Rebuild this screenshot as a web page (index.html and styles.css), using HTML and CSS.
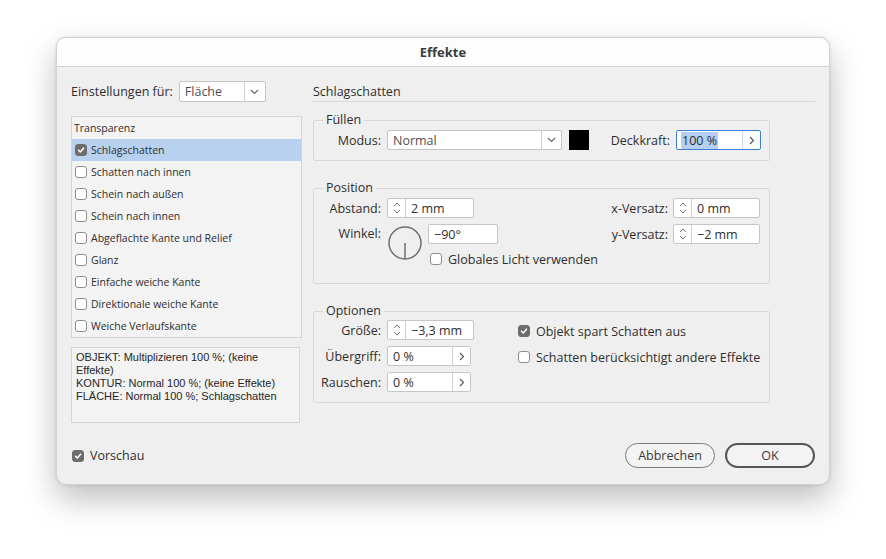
FILE: index.html
```html
<!DOCTYPE html>
<html lang="de">
<head>
<meta charset="utf-8">
<title>Effekte</title>
<link rel="stylesheet" href="styles.css">
</head>
<body>
<div class="dialog">
  <div class="titlebar">Effekte</div>
  <div class="content">
    <div class="leftcol">
      <div class="settings">
        <span class="lbl">Einstellungen für:</span>
        <div class="select sel-flaeche">
          <span class="sel-text">Fläche</span>
          <span class="sel-btn"><svg width="9" height="6" viewBox="0 0 9 6"><polyline points="1,1 4.5,4.5 8,1" fill="none" stroke="#666" stroke-width="1.1"/></svg></span>
        </div>
      </div>
      <div class="list">
        <div class="list-head">Transparenz</div>
        <div class="item selected"><span class="cb checked"><svg width="12" height="12" viewBox="0 0 12 12"><polyline points="3,6.2 5.2,8.4 9,3.8" fill="none" stroke="#fff" stroke-width="1.8" stroke-linecap="round" stroke-linejoin="round"/></svg></span>Schlagschatten</div>
        <div class="item"><span class="cb"></span>Schatten nach innen</div>
        <div class="item"><span class="cb"></span>Schein nach außen</div>
        <div class="item"><span class="cb"></span>Schein nach innen</div>
        <div class="item"><span class="cb"></span>Abgeflachte Kante und Relief</div>
        <div class="item"><span class="cb"></span>Glanz</div>
        <div class="item"><span class="cb"></span>Einfache weiche Kante</div>
        <div class="item"><span class="cb"></span>Direktionale weiche Kante</div>
        <div class="item"><span class="cb"></span>Weiche Verlaufskante</div>
      </div>
      <div class="info">OBJEKT: Multiplizieren 100 %; (keine Effekte)<br>KONTUR: Normal 100 %; (keine Effekte)<br>FLÄCHE: Normal 100 %; Schlagschatten</div>
    </div>
    <div class="rightcol">
      <div class="section-title">Schlagschatten</div>

      <fieldset class="group g-fill">
        <legend>Füllen</legend>
        <div class="fill-row">
          <span class="flabel">Modus:</span>
          <div class="select sel-modus">
            <span class="sel-text">Normal</span>
            <span class="sel-btn"><svg width="9" height="6" viewBox="0 0 9 6"><polyline points="1,1 4.5,4.5 8,1" fill="none" stroke="#666" stroke-width="1.1"/></svg></span>
          </div>
          <span class="swatch"></span>
          <span class="spacer"></span>
          <span class="lbl">Deckkraft:</span>
          <div class="field arrowfield focus">
            <span class="ftext"><span class="hl">100 %</span></span>
            <span class="arrow"><svg width="6" height="9" viewBox="0 0 6 9"><polyline points="1,1 4.5,4.5 1,8" fill="none" stroke="#555" stroke-width="1.1"/></svg></span>
          </div>
        </div>
      </fieldset>

      <fieldset class="group g-pos">
        <legend>Position</legend>
        <div class="split">
          <div class="block">
            <div class="row">
              <span class="flabel">Abstand:</span>
              <div class="field spin">
                <span class="spinbtn"><svg width="8" height="14" viewBox="0 0 8 14"><polyline points="1,5 4,2 7,5" fill="none" stroke="#777" stroke-width="1"/><polyline points="1,9 4,12 7,9" fill="none" stroke="#777" stroke-width="1"/></svg></span>
                <span class="ftext">2 mm</span>
              </div>
            </div>
            <div class="row angle-row">
              <span class="flabel">Winkel:</span>
              <svg class="dial" width="36" height="36" viewBox="0 0 36 36"><circle cx="18" cy="18" r="16" fill="none" stroke="#6e6e6e" stroke-width="1.5"/><line x1="18" y1="18" x2="18" y2="34" stroke="#6e6e6e" stroke-width="1.5"/></svg>
              <div class="angle-col">
                <div class="field angle"><span class="ftext">−90°</span></div>
                <label class="check"><span class="cb"></span>Globales Licht verwenden</label>
              </div>
            </div>
          </div>
          <div class="block right">
            <div class="row">
              <span class="lbl">x-Versatz:</span>
              <div class="field spin">
                <span class="spinbtn"><svg width="8" height="14" viewBox="0 0 8 14"><polyline points="1,5 4,2 7,5" fill="none" stroke="#777" stroke-width="1"/><polyline points="1,9 4,12 7,9" fill="none" stroke="#777" stroke-width="1"/></svg></span>
                <span class="ftext">0 mm</span>
              </div>
            </div>
            <div class="row">
              <span class="lbl">y-Versatz:</span>
              <div class="field spin">
                <span class="spinbtn"><svg width="8" height="14" viewBox="0 0 8 14"><polyline points="1,5 4,2 7,5" fill="none" stroke="#777" stroke-width="1"/><polyline points="1,9 4,12 7,9" fill="none" stroke="#777" stroke-width="1"/></svg></span>
                <span class="ftext">−2 mm</span>
              </div>
            </div>
          </div>
        </div>
      </fieldset>

      <fieldset class="group g-opt">
        <legend>Optionen</legend>
        <div class="split opt-split">
          <div class="block">
            <div class="row">
              <span class="flabel">Größe:</span>
              <div class="field spin">
                <span class="spinbtn"><svg width="8" height="14" viewBox="0 0 8 14"><polyline points="1,5 4,2 7,5" fill="none" stroke="#777" stroke-width="1"/><polyline points="1,9 4,12 7,9" fill="none" stroke="#777" stroke-width="1"/></svg></span>
                <span class="ftext">−3,3 mm</span>
              </div>
            </div>
            <div class="row">
              <span class="flabel">Übergriff:</span>
              <div class="field arrowfield small">
                <span class="ftext">0 %</span>
                <span class="arrow"><svg width="6" height="9" viewBox="0 0 6 9"><polyline points="1,1 4.5,4.5 1,8" fill="none" stroke="#555" stroke-width="1.1"/></svg></span>
              </div>
            </div>
            <div class="row">
              <span class="flabel">Rauschen:</span>
              <div class="field arrowfield small">
                <span class="ftext">0 %</span>
                <span class="arrow"><svg width="6" height="9" viewBox="0 0 6 9"><polyline points="1,1 4.5,4.5 1,8" fill="none" stroke="#555" stroke-width="1.1"/></svg></span>
              </div>
            </div>
          </div>
          <div class="block checks">
            <label class="check"><span class="cb checked"><svg width="12" height="12" viewBox="0 0 12 12"><polyline points="3,6.2 5.2,8.4 9,3.8" fill="none" stroke="#fff" stroke-width="1.8" stroke-linecap="round" stroke-linejoin="round"/></svg></span>Objekt spart Schatten aus</label>
            <label class="check"><span class="cb"></span>Schatten berücksichtigt andere Effekte</label>
          </div>
        </div>
      </fieldset>
    </div>
  </div>
  <div class="footer">
    <label class="check preview"><span class="cb checked"><svg width="12" height="12" viewBox="0 0 12 12"><polyline points="3,6.2 5.2,8.4 9,3.8" fill="none" stroke="#fff" stroke-width="1.8" stroke-linecap="round" stroke-linejoin="round"/></svg></span>Vorschau</label>
    <div class="buttons">
      <button class="btn">Abbrechen</button>
      <button class="btn ok">OK</button>
    </div>
  </div>
</div>
</body>
</html>
```
FILE: styles.css
```css
* { box-sizing: border-box; }
html, body { margin: 0; }
html { height: 100%; }
body {
  min-height: 100%;
  background: #ffffff;
  padding: 37px 0 0 56px;
  font-family: "Open Sans", "Noto Sans", sans-serif;
  font-size: 12.5px;
  color: #2e2e2e;
}
.dialog {
  width: 774px;
  height: 448px;
  background: #efefef;
  border-radius: 10px;
  border: 1px solid #d2d2d2;
  box-shadow: 0 14px 32px rgba(0,0,0,0.26), 0 0 3px rgba(0,0,0,0.12);
  display: flex;
  flex-direction: column;
  overflow: hidden;
}
.titlebar {
  height: 29px;
  flex: none;
  background: #fdfdfd;
  border-bottom: 1px solid #d4d4d4;
  display: flex;
  align-items: center;
  justify-content: center;
  font-weight: 700;
  font-size: 13px;
  color: #3b3b3b;
}
.content {
  flex: 1;
  display: flex;
  gap: 11px;
  padding: 14px 14px 0 14px;
}
.leftcol { width: 231px; flex: none; display: flex; flex-direction: column; }
.settings { height: 21px; display: flex; align-items: center; gap: 6px; }
.lbl { white-space: nowrap; }
.select {
  height: 21px;
  background: #fff;
  border: 1px solid #c5c5c5;
  border-radius: 2px;
  display: flex;
  align-items: stretch;
}
.sel-text { flex: 1; padding-left: 5px; display: flex; align-items: center; color: #4f4f4f; }
.sel-btn { width: 21px; border-left: 1px solid #d0d0d0; display: flex; align-items: center; justify-content: center; }
.sel-flaeche { width: 87px; }
.list {
  margin-top: 14px;
  height: 222px;
  border: 1px solid #d5d5d5;
  background: #f3f3f3;
  font-size: 10.5px;
}
.list-head { height: 22px; display: flex; align-items: center; padding-left: 2px; padding-bottom: 1px; }
.item { height: 22px; display: flex; align-items: center; padding-left: 3px; }
.item .cb { margin-right: 4px; }
.item.selected { background: #b8d1ef; }
.cb {
  width: 12px; height: 12px; flex: none;
  border: 1px solid #8c8c8c;
  border-radius: 3px;
  background: #fff;
  margin-right: 2px;
  display: inline-flex;
  align-items: center;
  justify-content: center;
}
.cb.checked { background: #6d6d6d; border-color: #6d6d6d; }
.cb svg { display: block; }
.info {
  margin-top: 9px;
  width: 229px;
  height: 76px;
  border: 1px solid #d5d5d5;
  background: #f3f3f3;
  font-family: "Liberation Sans", Arial, sans-serif;
  font-size: 11px;
  line-height: 13px;
  padding: 3px 4px;
  color: #262626;
}
.rightcol { width: 502px; flex: none; display: flex; flex-direction: column; }
.section-title {
  height: 21px;
  border-bottom: 1px solid #d9d9d9;
  display: flex;
  align-items: flex-end;
  padding-bottom: 1px;
  font-size: 12.5px;
  line-height: 17px;
}
.group {
  margin: 0;
  padding: 0;
  width: 457px;
  border: 1px solid #d8d8d8;
  border-radius: 2px;
  min-width: 0;
}
.group legend {
  margin-left: 9px;
  padding: 0 3px;
  line-height: 14px;
  font-size: 12.5px;
}
.g-fill { margin-top: 11px; padding: 3px 8px 10px 0; }
.g-pos { margin-top: 20px; padding: 3px 9px 17px 0; }
.g-opt { margin-top: 20px; padding: 2px 9px 10px 0; }
.fill-row { display: flex; align-items: center; height: 20px; }
.flabel { width: 67px; flex: none; text-align: right; margin-right: 6px; white-space: nowrap; }
.sel-modus { width: 175px; height: 20px; }
.sel-modus .sel-btn { width: 20px; }
.swatch { width: 20px; height: 20px; background: #000; margin-left: 7px; flex: none; }
.spacer { flex: 1; }
.fill-row .lbl { margin-right: 6px; }
.field {
  height: 20px;
  background: #fff;
  border: 1px solid #c5c5c5;
  border-radius: 2px;
  display: flex;
  align-items: stretch;
}
.ftext { flex: 1; display: flex; align-items: center; padding-left: 5px; white-space: nowrap; }
.arrowfield { width: 85px; }
.arrowfield.small { width: 84px; }
.arrow { width: 18px; border-left: 1px solid #d0d0d0; display: flex; align-items: center; justify-content: center; }
.focus { border-color: #3d7fd6; }
.focus .arrow { border-left-color: #c9d9ee; }
.hl { background: #b4cff2; padding: 0 1px; margin-left: -1px; }
.spin { width: 87px; }
.spinbtn { width: 18px; border-right: 1px solid #d0d0d0; display: flex; align-items: center; justify-content: center; }
.split { display: flex; justify-content: space-between; }
.block { display: flex; flex-direction: column; gap: 6px; }
.row { display: flex; align-items: center; height: 20px; }
.block.right .lbl { margin-right: 5px; }
.block.right .row { justify-content: flex-end; }
.angle-row { align-items: flex-start; height: auto; }
.angle-row .flabel { line-height: 20px; }
.dial { flex: none; margin-top: 1px; }
.angle-col { display: flex; flex-direction: column; gap: 8px; margin-left: 5px; }
.angle { width: 70px; }
.check { display: flex; align-items: center; gap: 4px; height: 14px; white-space: nowrap; }
.angle-col .check { margin-left: 2px; }
.opt-split { justify-content: flex-start; }
.checks { margin-left: 44px; padding-top: 4px; gap: 12px; }
.footer {
  flex: none;
  display: flex;
  justify-content: space-between;
  align-items: center;
  padding: 0 14px 16px 15px;
}
.preview { font-size: 12.5px; }
.buttons { display: flex; gap: 10px; }
.btn {
  width: 90px;
  height: 25px;
  border: 1px solid #7a7a7a;
  border-radius: 13px;
  background: #f3f3f3;
  font-family: inherit;
  font-size: 12.5px;
  color: #3a3a3a;
  padding: 0;
}
.btn.ok { border: 2px solid #555; }
```
